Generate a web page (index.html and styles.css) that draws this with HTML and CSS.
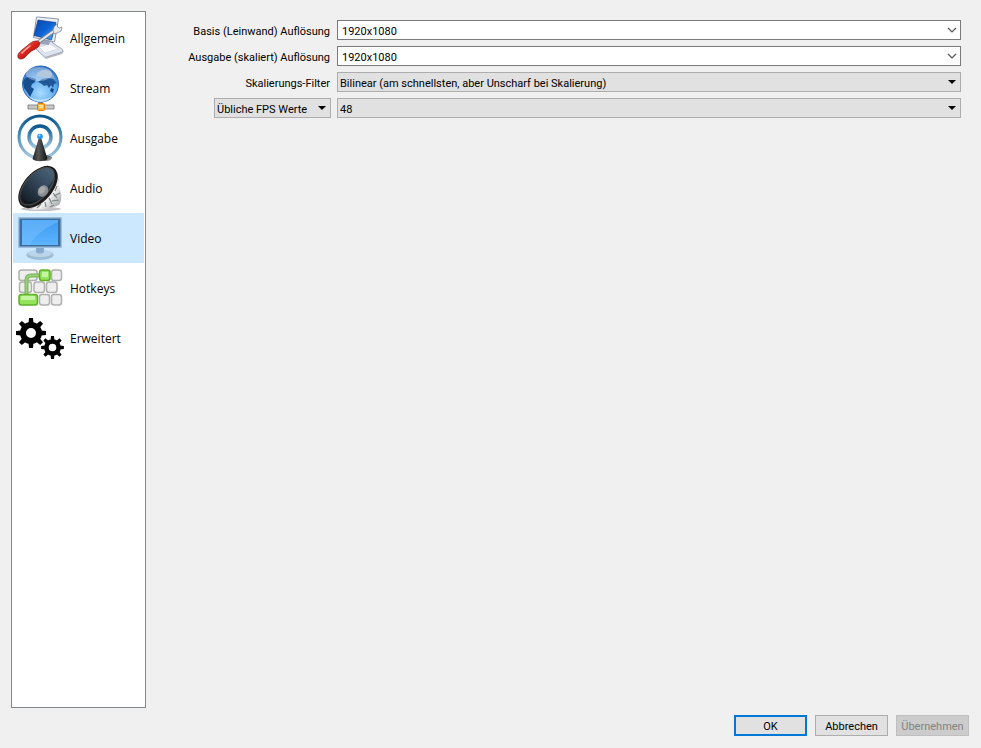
FILE: index.html
```html
<!DOCTYPE html>
<html lang="de">

<head>
    <meta charset="utf-8">
    <title>Einstellungen</title>
    <link rel="stylesheet" href="styles.css">
</head>

<body>
    <form class="dialog">
        <div class="content">
            <nav class="sidebar">
                <button type="button" class="tab">
                    <svg class="icon" viewBox="0 0 48 48">
                        <defs>
                            <linearGradient id="screen" x1="0" y1="0" x2="1" y2="1">
                                <stop offset="0" stop-color="#0a45a8" />
                                <stop offset="0.5" stop-color="#0c62d4" />
                                <stop offset="1" stop-color="#4cb4ff" />
                            </linearGradient>
                            <linearGradient id="handle" x1="0" y1="0" x2="1" y2="1">
                                <stop offset="0" stop-color="#f58a80" />
                                <stop offset="0.5" stop-color="#d8231c" />
                                <stop offset="1" stop-color="#8c0b08" />
                            </linearGradient>
                        </defs>
                        <path d="M20 34l13-3 15 6-2 3-16 5z" fill="#bbb" />
                        <path d="M19 31l15-4 12.500 8.500v2.500L29 43.500 19 34z" fill="#dfe3ee" stroke="#a3aabd" />
                        <path d="M23 33l11-3 8 5-13 4z" fill="#f8f9fc" stroke="#c8cedb" stroke-width=".6" />
                        <path d="M25 24l9 2-1 5-9-1z" fill="#9aa4bc" />
                        <path d="M20.500 3h2L42.500 5 38.500 28 17.500 23.500z" fill="#e9edf5" stroke="#8f98ab" />
                        <path d="M22 6l18 2.500-4.500 17.500-17.500-4.500z" fill="url(#screen)" stroke="#082c70" stroke-width=".6" />
                        <path d="M17 32L42 14" stroke="#7d828e" stroke-width="3.600" />
                        <path d="M17 32L42 14" stroke="#e6e8ee" stroke-width="2" />
                        <path d="M37 16l1.500-4 3-2v3l2 1 2.500-1-1 4-4 2-3 1z" fill="#e8eaf0" stroke="#777e8c" stroke-width=".7" />
                        <path d="M2 43c-1-4 4-7 9-11 3-3 6-5 9-5 4 0 5 3 2 6s-6 3-9 6-5 6-8 6c-2 0-3-1-3-2z" fill="url(#handle)" stroke="#8c0b08" stroke-width=".7" />
                        <path d="M6 39c3-3 5-5 8-7" fill="none" stroke="#fbb5ae" stroke-width="1.500" stroke-linecap="round" />
                    </svg>
                    Allgemein
                </button>
                <button type="button" class="tab">
                    <svg class="icon" viewBox="0 0 48 48">
                        <defs>
                            <radialGradient id="globe" cx=".5" cy=".75" r=".75">
                                <stop offset="0" stop-color="#a8dcff" />
                                <stop offset="0.6" stop-color="#5ba6ec" />
                                <stop offset="1" stop-color="#2a68bd" />
                            </radialGradient>
                        </defs>
                        <path d="M22 36h5v5h-5z" fill="#8e8e8e" />
                        <path d="M12 41h26v4H12z" fill="#c8c8c8" stroke="#777" stroke-width=".8" />
                        <circle cx="24.500" cy="20" r="18" fill="url(#globe)" stroke="#2f6ab8" />
                        <path d="M7 18c1-3 3-5 6-5l4 1 3 1-1 3-3 2-1 3 3 2-2 4-2 4-3-5-3-4z" fill="#174c8d" />
                        <path d="M22 18l4-3 6-1 5 1 4 4-3 1-1 4-2-3-2 3-2-3-3 1-2-2z" fill="#1f5797" />
                        <path d="M35 24l3 1-1 4-3-2z" fill="#174c8d" />
                        <path d="M20 12c2-5 6-7 12-6 4 2 6 5 7 9-6-2-13-1-19-3z" fill="#8ba9cd" />
                        <ellipse cx="23" cy="10" rx="13" ry="7" fill="#fff" opacity=".35" />
                        <path d="M13 32c6 5 17 5 23 0-5 8-18 8-23 0z" fill="#d8f2ff" opacity=".7" />
                        <rect x="21.500" y="39.500" width="7" height="7" rx="1" fill="#ffb52e" stroke="#e07a00" />
                        <path d="M23 41h4v3h-4z" fill="#ffe39a" />
                    </svg>
                    Stream
                </button>
                <button type="button" class="tab">
                    <svg class="icon" viewBox="0 0 48 48">
                        <defs>
                            <linearGradient id="wave" x1="0" y1="0" x2="0" y2="1">
                                <stop offset="0" stop-color="#0b568c" />
                                <stop offset="0.5" stop-color="#5290bb" />
                                <stop offset="1" stop-color="#a9c9df" />
                            </linearGradient>
                            <linearGradient id="mast">
                                <stop offset="0" stop-color="#222" />
                                <stop offset="0.4" stop-color="#555" />
                                <stop offset="1" stop-color="#111" />
                            </linearGradient>
                        </defs>
                        <circle cx="24" cy="23" r="21" fill="none" stroke="url(#wave)" stroke-width="3" />
                        <circle cx="24" cy="23" r="11" fill="none" stroke="url(#wave)" stroke-width="3.500" />
                        <path d="M27 45l4-4 5 2c0 3-3 4-7 4z" fill="#222" opacity=".55" />
                        <path d="M22.500 25h3L31.500 45c-3 3-12 3-15 0z" fill="url(#mast)" />
                        <circle cx="24" cy="22.500" r="2.800" fill="#2395ee" />
                        <circle cx="23.500" cy="21.500" r="1" fill="#a5dcff" />
                    </svg>
                    Ausgabe
                </button>
                <button type="button" class="tab">
                    <svg class="icon" viewBox="0 0 48 48">
                        <defs>
                            <linearGradient id="cone" x1="0" y1="0" x2="1" y2="0">
                                <stop offset="0" stop-color="#101820" />
                                <stop offset="0.6" stop-color="#35495c" />
                                <stop offset="1" stop-color="#4b6278" />
                            </linearGradient>
                            <linearGradient id="metal" x1="0" y1="0" x2="1" y2="1">
                                <stop offset="0" stop-color="#777" />
                                <stop offset="0.6" stop-color="#f4f4f4" />
                                <stop offset="1" stop-color="#8b8f90" />
                            </linearGradient>
                        </defs>
                        <ellipse cx="25" cy="45" rx="20" ry="2" fill="#999" opacity=".6" />
                        <path d="M41 10l3 8-1 4 2 7c1 4 0 9-2 12l-10 4-18 1z" fill="url(#metal)" />
                        <path d="M41 22l-2 5M44 29l-6 3M37 29l4 5M43 36l-7 1M33 34l3 6M38 41l-4 2M29 38l1 5M25 40l-4 4" stroke="#7b8384" stroke-width="1.200" />
                        <g transform="rotate(-49 22 23)">
                            <ellipse cx="22" cy="23" rx="25" ry="14.500" fill="#1b1b1b" />
                            <ellipse cx="22" cy="22" rx="22.500" ry="12" fill="url(#cone)" stroke="#4d4d4d" />
                        </g>
                        <path d="M7 35c4 4 12 2 18-1l5-10C38 17 41 11 38 7c3 10-9 27-21 32-5 2-9 0-10-4z" fill="#090d12" opacity=".35" />
                        <ellipse cx="27" cy="27" rx="5" ry="6" transform="rotate(35 27 27)" fill="#888d91" />
                        <ellipse cx="26" cy="26" rx="3" ry="4" transform="rotate(35 26 26)" fill="#a5a9ac" />
                    </svg>
                    Audio
                </button>
                <button type="button" class="tab active">
                    <svg class="icon" viewBox="0 0 48 48">
                        <defs>
                            <linearGradient id="display" x1="0" y1="0" x2="0" y2="1">
                                <stop offset="0" stop-color="#3e9bf0" />
                                <stop offset="1" stop-color="#5db4ff" />
                            </linearGradient>
                        </defs>
                        <ellipse cx="24" cy="41" rx="13.500" ry="5" fill="#9fbcd6" />
                        <ellipse cx="24" cy="39.500" rx="12" ry="3.500" fill="#bcd4e9" />
                        <path d="M20 33h8v5c-2 2-6 2-8 0z" fill="#86abce" />
                        <rect x="2" y="3" width="44" height="31" rx="1" fill="#9ebfdd" />
                        <rect x="3.500" y="4.500" width="41" height="28" fill="#3d6d9c" />
                        <rect x="6" y="6" width="36" height="25" fill="url(#display)" />
                        <path d="M6 6h36v2C31 13 18 21 14 31H6z" fill="#79c0ff" opacity=".5" />
                    </svg>
                    Video
                </button>
                <button type="button" class="tab">
                    <svg class="icon" viewBox="0 0 48 48">
                        <g fill="#eee" stroke="#b0b0b0" stroke-width="1.500">
                            <rect x="3" y="6" width="18" height="10.500" rx="2.500" />
                            <rect x="35.500" y="6" width="10" height="10.500" rx="2.500" />
                            <rect x="3.500" y="18" width="12" height="10.500" rx="2.500" />
                            <rect x="18" y="18" width="10.500" height="10.500" rx="2.500" />
                            <rect x="30.500" y="18" width="10.500" height="10.500" rx="2.500" />
                            <rect x="23.500" y="30.500" width="10" height="10.500" rx="2.500" />
                            <rect x="35.500" y="30.500" width="10" height="10.500" rx="2.500" />
                        </g>
                        <path d="M10.500 32V16q0-4.500 4.500-4.500h9" fill="none" stroke="#77b255" stroke-width="4" />
                        <path d="M10.500 32V16q0-4.500 4.500-4.500h9" fill="none" stroke="#9bcf7c" stroke-width="2" />
                        <g fill="#93e45a" stroke="#5fb02c" stroke-width="1.500">
                            <rect x="23.500" y="6" width="10.500" height="10.500" rx="2.500" />
                            <rect x="3" y="30.500" width="18.500" height="10.500" rx="2.500" />
                        </g>
                        <path d="M26 8h6v5h-6zM5 32h14v4H5z" fill="#c6f5a2" />
                    </svg>
                    Hotkeys
                </button>
                <button type="button" class="tab">
                    <svg class="icon" viewBox="0 0 48 48">
                        <defs>
                            <g id="gear">
                                <circle r="8" fill="none" stroke="#000" stroke-width="6" />
                                <path id="teeth" d="M-2.500-9.500L-2-15h4l.5 5.500zM-2.500 9.500L-2 15h4l.5-5.500z" />
                                <use href="#teeth" transform="rotate(45)" />
                                <use href="#teeth" transform="rotate(90)" />
                                <use href="#teeth" transform="rotate(135)" />
                            </g>
                        </defs>
                        <use href="#gear" transform="translate(15 19)" />
                        <use href="#gear" transform="translate(36.500 33.500) scale(.76)" />
                    </svg>
                    Erweitert
                </button>
            </nav>

            <div class="settings">
                <label for="baseRes">Basis (Leinwand) Auflösung</label>
                <div class="combo editable">
                    <select id="baseRes">
                        <option>1920x1080</option>
                    </select>
                    <svg class="arrow" viewBox="0 0 10 6"><path d="M1 1l4 4 4-4" fill="none" stroke="#555" stroke-width="1.200" /></svg>
                </div>

                <label for="outputRes">Ausgabe (skaliert) Auflösung</label>
                <div class="combo editable">
                    <select id="outputRes">
                        <option>1920x1080</option>
                    </select>
                    <svg class="arrow" viewBox="0 0 10 6"><path d="M1 1l4 4 4-4" fill="none" stroke="#555" stroke-width="1.200" /></svg>
                </div>

                <label for="filter">Skalierungs-Filter</label>
                <div class="combo">
                    <select id="filter">
                        <option>Bilinear (am schnellsten, aber Unscharf bei Skalierung)</option>
                    </select>
                    <svg class="arrow" viewBox="0 0 10 6"><path d="M1 1h8L5 5z" /></svg>
                </div>

                <div class="combo fps-type">
                    <select id="fpsType" aria-label="FPS Typ">
                        <option>Übliche FPS Werte</option>
                    </select>
                    <svg class="arrow" viewBox="0 0 10 6"><path d="M1 1h8L5 5z" /></svg>
                </div>
                <div class="combo">
                    <select id="fps" aria-label="FPS">
                        <option>48</option>
                    </select>
                    <svg class="arrow" viewBox="0 0 10 6"><path d="M1 1h8L5 5z" /></svg>
                </div>
            </div>
        </div>

        <div class="buttons">
            <button type="submit" class="btn default">OK</button>
            <button type="button" class="btn">Abbrechen</button>
            <button type="button" class="btn" disabled>Übernehmen</button>
        </div>
    </form>
</body>

</html>
```
FILE: styles.css
```css
* {
    box-sizing: border-box;
}

body {
    margin: 0;
    background: #f0f0f0;
    color: #000;
    font-family: Tahoma, Roboto, sans-serif;
    font-size: 11px;
}

button,
select {
    font: inherit;
    color: inherit;
    margin: 0;
}

.dialog {
    display: flex;
    flex-direction: column;
    gap: 7px;
    min-height: 100vh;
    padding: 11px 12px 12px 11px;
}

.content {
    display: flex;
    flex: 1;
}

/* category list */
.sidebar {
    display: flex;
    flex-direction: column;
    width: 135px;
    padding: 1px;
    background: #fff;
    border: 1px solid #828790;
}

.tab {
    display: flex;
    align-items: center;
    gap: 6px;
    height: 50px;
    padding: 0 3px;
    border: none;
    background: none;
    font-family: 'Segoe UI', 'Open Sans', sans-serif;
    font-size: 12px;
    text-align: left;
}

.tab.active {
    background: #cce8ff;
}

.icon {
    width: 48px;
    height: 48px;
    flex-shrink: 0;
}

/* video settings */
.settings {
    flex: 1;
    display: grid;
    grid-template-columns: 145px 1fr;
    grid-auto-rows: 20px;
    gap: 6px;
    align-content: start;
    align-items: center;
    padding: 9px 8px 0 40px;
}

.settings label {
    text-align: right;
    white-space: nowrap;
    padding: 2px 1px 0 0;
}

.combo {
    position: relative;
    height: 20px;
}

.combo select {
    appearance: none;
    display: block;
    width: 100%;
    height: 100%;
    padding: 2px 16px 0 2px;
    border: 1px solid #adadad;
    border-radius: 0;
    background: #e1e1e1;
}

.combo.editable select {
    padding-left: 4px;
    border-color: #7a7a7a;
    background: #fff;
}

.fps-type {
    justify-self: end;
    width: 117px;
}

.arrow {
    position: absolute;
    top: 7px;
    right: 4px;
    width: 10px;
    height: 6px;
    pointer-events: none;
}

/* dialog buttons */
.buttons {
    display: flex;
    justify-content: flex-end;
    gap: 8px;
}

.btn {
    width: 73px;
    height: 21px;
    padding: 2px 0 0;
    border: 1px solid #adadad;
    background: #e1e1e1;
}

.btn.default {
    border: 2px solid #0078d7;
}

.btn:disabled {
    border-color: #bfbfbf;
    background: #ccc;
    color: #838383;
}
```
